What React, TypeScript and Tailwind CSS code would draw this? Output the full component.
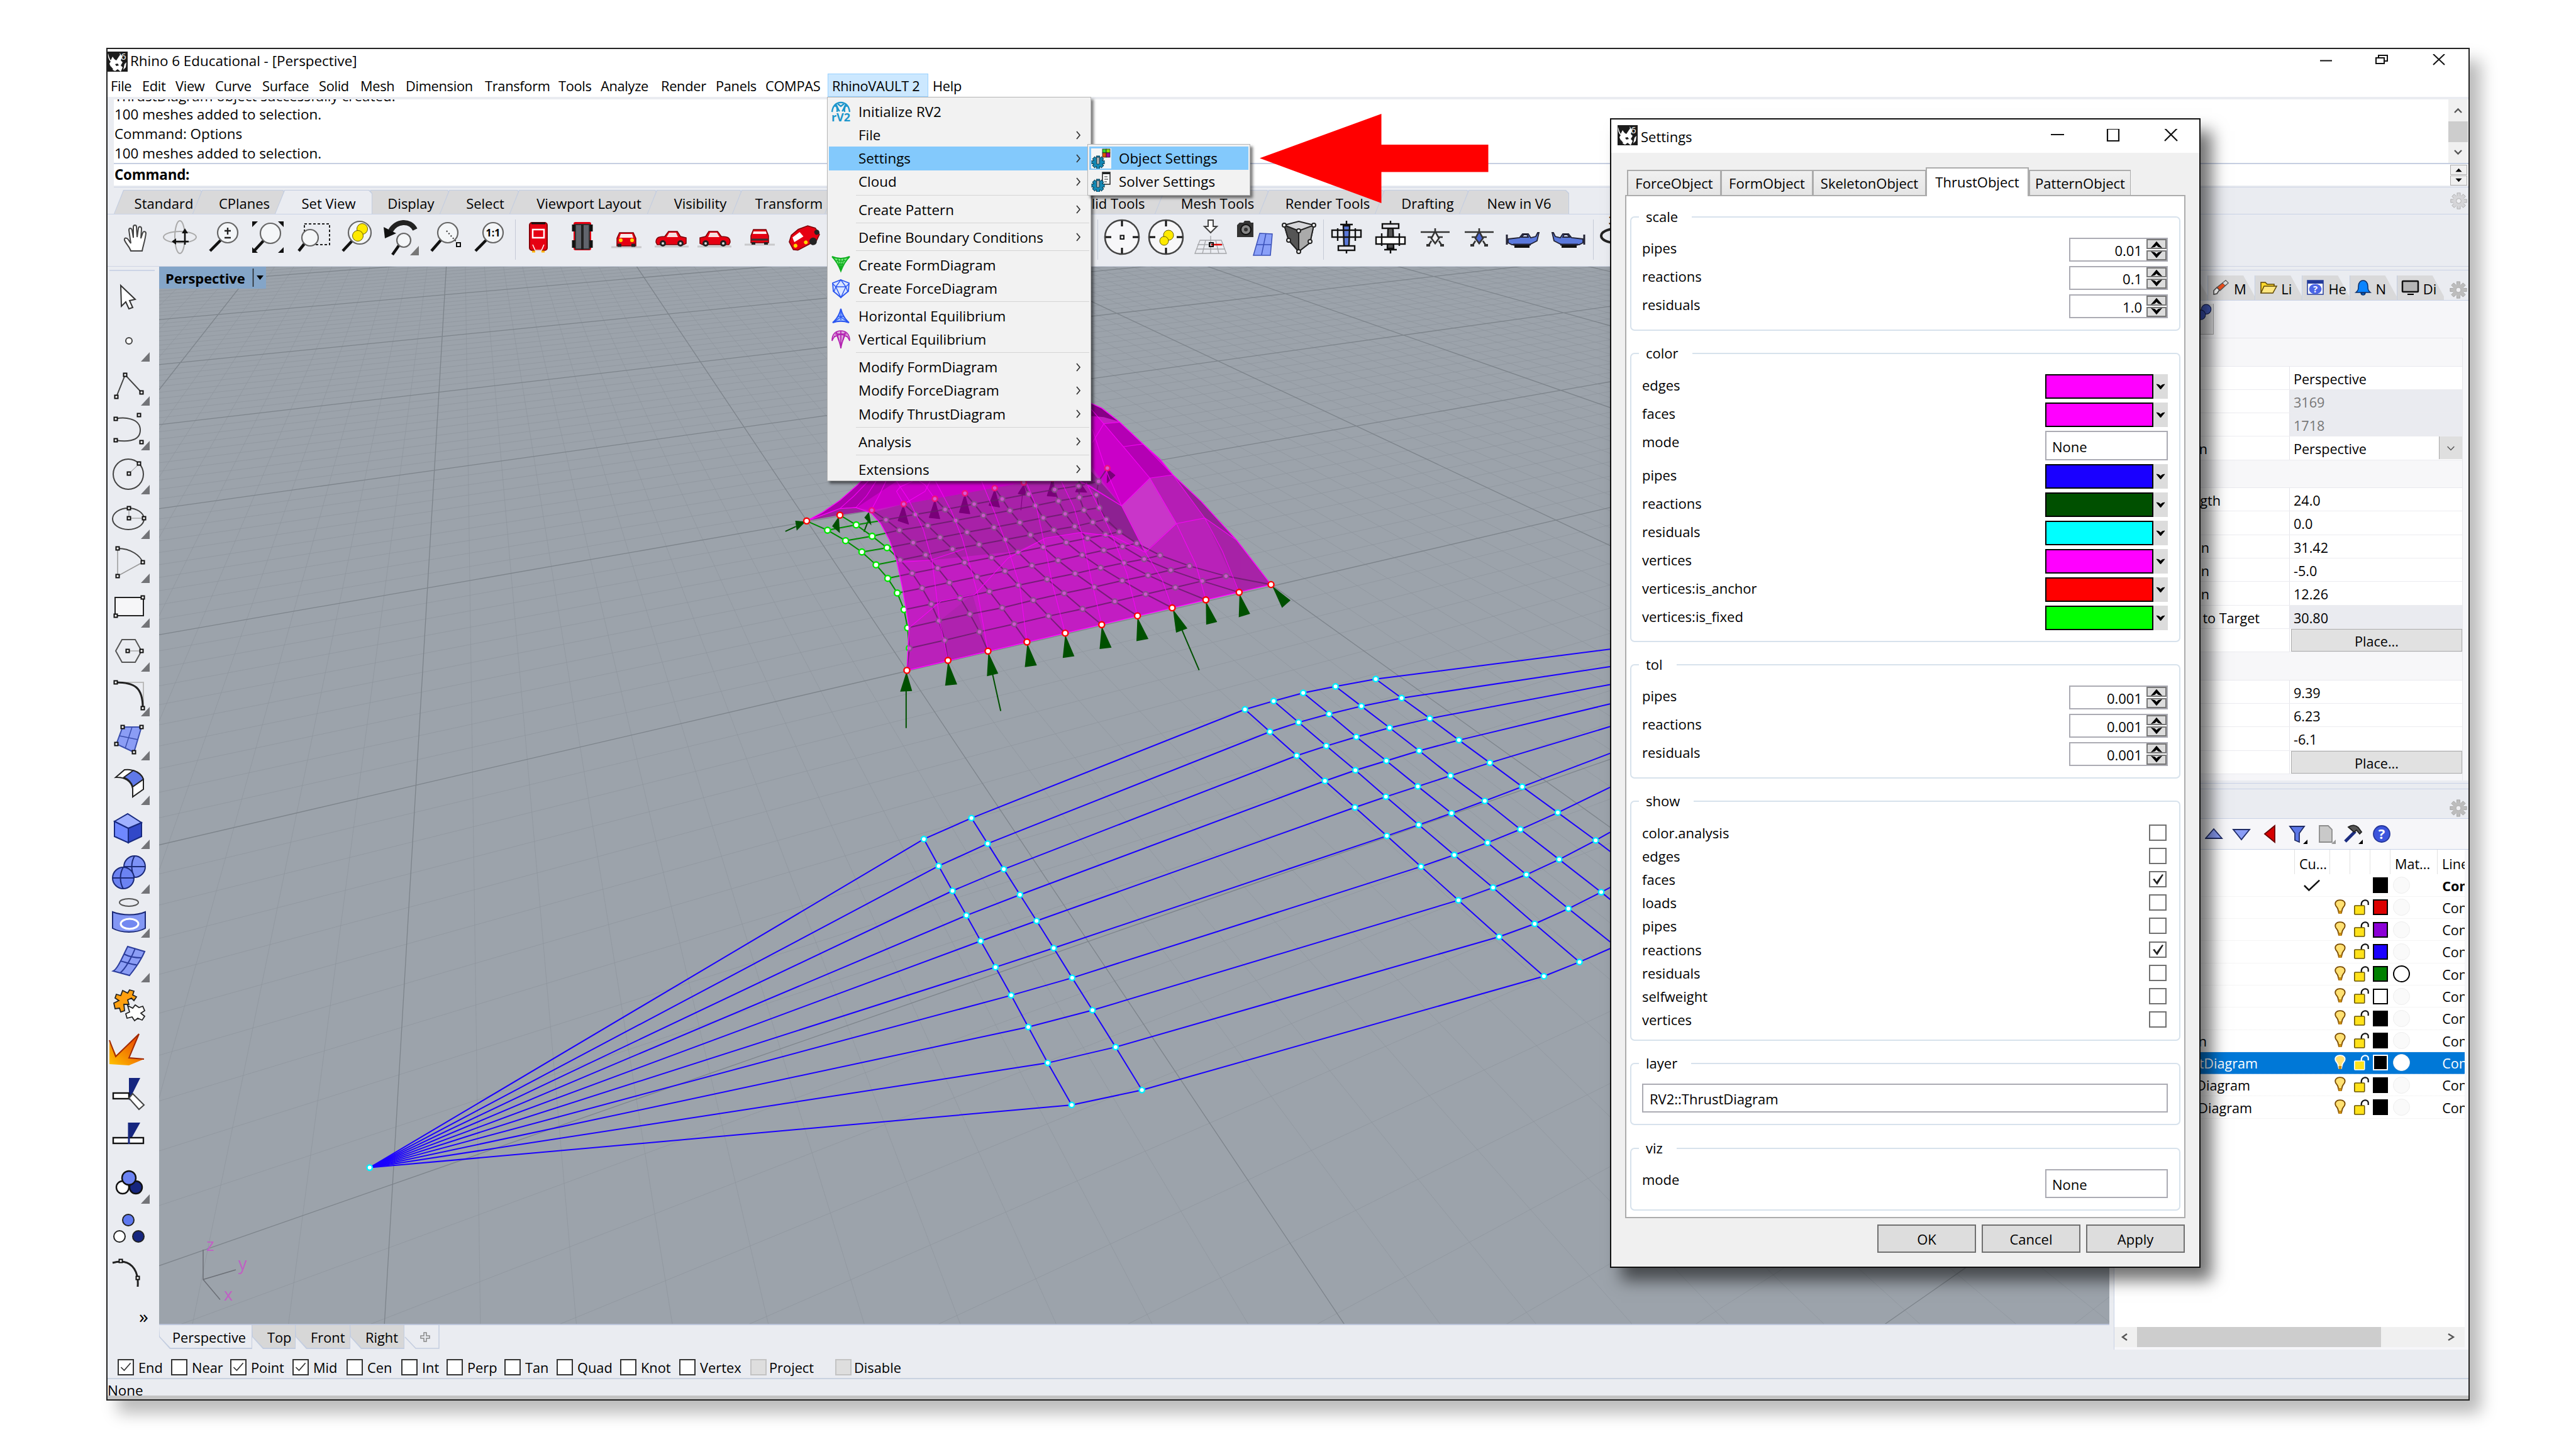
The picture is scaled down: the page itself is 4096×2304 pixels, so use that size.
import React from "react";

type Pt = [number, number];

/* ---------- shared bits ---------- */

function RhinoMark({ className }: { className: string }) {
  return (
    <svg viewBox="0 0 32 32" className={className}>
      <rect width="32" height="32" fill="#1c1c1c" />
      <path d="M1 3c1 4 2 8 4 11l3-6c2 3 3 5 6 6l6-9-1-3c4 4 4 8 2 12l3 3-3 5 3 3-3 7-5-4-4 3-6-3-3-9 2-3C2 13 0 8 1 3z" fill="#fff" />
      <path d="M4 22l5 6-3 2zM12 20l4-1 2 3-4 1z" fill="#1c1c1c" />
      <path d="M27 20l3-3-1 8-4 4z" fill="#fff" />
      <text x="21" y="13" fontSize="15" fill="#fff" fontFamily="Open Sans, sans-serif">6</text>
    </svg>
  );
}

function Gear({ className, color = "#bdbdbd" }: { className: string; color?: string }) {
  return (
    <svg viewBox="-16 -16 32 32" className={className} fill={color} stroke="#9a9a9a" strokeWidth="0.8">
      {[0, 45, 90, 135].map((a) => (
        <rect key={a} x="-3" y="-15" width="6" height="30" transform={`rotate(${a})`} />
      ))}
      <circle r="10.5" stroke="none" />
      <circle r="4.5" fill="#efeff2" />
    </svg>
  );
}

/* ---------- title + menu bar ---------- */

function TitleBar() {
  return (
    <div className="flex h-[39px] shrink-0 items-center bg-white">
      <RhinoMark className="h-[32px] w-[32px]" />
      <span className="ml-[4px]">Rhino 6 Educational - [Perspective]</span>
      <svg viewBox="0 0 200 24" className="mr-[37px] ml-auto h-[24px] w-[200px]" fill="none" stroke="#111" strokeWidth="2">
        <path d="M1 10.500h19" />
        <path d="M90 6h13v9h-13zM94 6V2h14v9h-4" />
        <path d="M181 0l18 17M199 0l-18 17" />
      </svg>
    </div>
  );
}

const MENUS: [string, string][] = [
  ["File", "w-[50px]"], ["Edit", "w-[53px]"], ["View", "w-[63px]"], ["Curve", "w-[75px]"], ["Surface", "w-[90px]"],
  ["Solid", "w-[66px]"], ["Mesh", "w-[72px]"], ["Dimension", "w-[126px]"], ["Transform", "w-[117px]"], ["Tools", "w-[67px]"],
  ["Analyze", "w-[96px]"], ["Render", "w-[87px]"], ["Panels", "w-[79px]"], ["COMPAS", "w-[99px]"],
];

function MenuBar() {
  return (
    <div className="flex h-[37px] shrink-0 items-stretch bg-white pl-[5px] text-[21.800px] leading-[40px] tracking-[-0.300px]">
      {MENUS.map(([m, w]) => (
        <div key={m} className={w}>{m}</div>
      ))}
      <div className="w-[160px] border border-[#99d1ff] bg-[#cce8ff] pl-[6px] leading-[38px]">RhinoVAULT 2</div>
      <div className="pl-[7px]">Help</div>
    </div>
  );
}

/* ---------- command area ---------- */

function CommandArea() {
  return (
    <div className="h-[145px] shrink-0 bg-[#eaecf1] pt-[4px] pl-[10px]">
      <div className="flex h-[103px] border-b-2 border-[#c6cfe2] bg-white">
        <div className="flex h-[101px] flex-1 flex-col justify-end overflow-hidden pl-[1px] leading-[31px]">
          <div className="h-[29px] shrink-0 leading-[31px]">ThrustDiagram object successfully created.</div>
          <div>100 meshes added to selection.</div>
          <div>Command: Options</div>
          <div>100 meshes added to selection.</div>
        </div>
        <div className="mr-[1px] flex w-[31px] flex-col bg-[#f0f0f0]">
          <svg viewBox="0 0 31 35" className="h-[35px]" fill="none" stroke="#555" strokeWidth="2.4"><path d="M10 21l5.500-5.500L21 21" /></svg>
          <div className="h-[33px] bg-[#cdcdcd]" />
          <svg viewBox="0 0 31 33" className="h-[33px]" fill="none" stroke="#555" strokeWidth="2.4"><path d="M10 13l5.500 5.500L21 13" /></svg>
        </div>
      </div>
      <div className="flex h-[34px] items-center bg-white pl-[1px]">
        <b className="tracking-[-0.200px]">Command:</b>
        <div className="mr-[2px] ml-auto flex w-[27px] flex-col gap-[1px]">
          <svg viewBox="0 0 27 15" className="h-[16px] border border-[#adadad] bg-[#f0f0f0]"><path d="M8 11l5.500-6 5.500 6z" /></svg>
          <svg viewBox="0 0 27 15" className="h-[16px] border border-[#adadad] bg-[#f0f0f0]"><path d="M8 4l5.500 6 5.500-6z" /></svg>
        </div>
      </div>
      <div className="mt-[2px] border-t border-[#cdd4e4]" />
    </div>
  );
}

/* ---------- toolbar tabs ---------- */

const TOOL_TABS: [string, string][] = [
  ["Standard", "w-[143px]"], ["CPlanes", "w-[149px]"], ["Set View", "w-[155px]"], ["Display", "w-[143px]"], ["Select", "w-[129px]"],
  ["Viewport Layout", "w-[237px]"], ["Visibility", "w-[153px]"], ["Transform", "w-[165px]"], ["Curve Tools", "w-[184px]"],
  ["Surface Tools", "w-[202px]"], ["Solid Tools", "w-[193px]"], ["Mesh Tools", "w-[184px]"], ["Render Tools", "w-[202px]"],
  ["Drafting", "w-[152px]"], ["New in V6", "w-[175px]"],
];

function ToolTabs() {
  return (
    <div className="flex h-[42px] shrink-0 items-end border-b border-[#c9d2e6] bg-[#eaecf1] pl-[10px]">
      <div className="flex h-[38px]">
        {TOOL_TABS.map(([t, w], i) => (
          <div
            key={t}
            className={`${w} ${i ? "-ml-[18px]" : ""} ${t === "Set View" ? "z-10" : ""} relative h-[38px] bg-[#c3cde0] p-px pb-0 [clip-path:polygon(15px_0,calc(100%_-_5px)_0,100%_5px,100%_100%,0_100%)]`}
          >
            <div
              className={`${t === "Set View" ? "bg-[#eaecf1]" : "bg-[#d9d9da]"} h-full pl-[16px] text-center text-[22px] leading-[41px] [clip-path:polygon(15px_0,calc(100%_-_5px)_0,100%_5px,100%_100%,0_100%)]`}
            >
              {t}
            </div>
          </div>
        ))}
      </div>
      <Gear className="mr-[2px] mb-[7px] ml-auto h-[27px] w-[27px]" color="#d5d5d8" />
    </div>
  );
}

/* ---------- toolbar icons (56 x 56 art board) ---------- */

function Lens({ cx = 34, cy = 21, r = 16, children }: { cx?: number; cy?: number; r?: number; children?: React.ReactNode }) {
  return (
    <g>
      <path d={`M${cx - r * 0.7} ${cy + r * 0.75}L6 50`} stroke="#111" strokeWidth="4.500" />
      <circle cx={cx} cy={cy} r={r} fill="#f4f6f8" stroke="#666" strokeWidth="2.2" />
      {children}
    </g>
  );
}

const Corner = () => <path d="M56 42v15H42z" fill="#777" />;

const CarSide = ({ flip = false }: { flip?: boolean }) => (
  <g transform={flip ? "translate(56 0) scale(-1 1)" : undefined}>
    <path d="M2 43h54" stroke="#c9c9cc" strokeWidth="3" />
    <path d="M4 36c0-8 6-9 14-9l6-8h14l5 8 9 2v9l-4 2H6z" fill="#e60012" stroke="#7d0008" strokeWidth="1.5" />
    <path d="M25 21h11l3 7H21z" fill="#f7dede" />
    <circle cx="15" cy="38" r="5" fill="#222" /><circle cx="15" cy="38" r="2" fill="#ddd" />
    <circle cx="43" cy="38" r="5" fill="#222" /><circle cx="43" cy="38" r="2" fill="#ddd" />
  </g>
);

const PlaneTop = ({ under = false }: { under?: boolean }) => (
  <g stroke="#111" strokeWidth="2.4" transform={under ? "rotate(180 28 28)" : undefined}>
    <path d="M28 2v52M18 8h20" />
    <path d="M23 10h10l-1 30-4 10-4-10z" fill={under ? "#555" : "#5a78d8"} />
    <rect x="5" y="17" width="46" height="11" fill={under ? "#fff" : "none"} />
    <path d="M14 14v20M42 14v20" />
    <rect x="15" y="42" width="26" height="7" fill="#e8e8ee" />
  </g>
);

const PlaneFront = ({ fill }: { fill: string }) => (
  <g stroke="#333" strokeWidth="2.6">
    <path d="M5 20h46M28 14v7M22 34l-5 8M34 34l5 8M16 28h24" />
    <path d="M28 19l6 11-6 8-6-8z" fill={fill} />
    <path d="M14 41h6M36 41h6" strokeWidth="4" />
  </g>
);

const PlaneSide = ({ flip = false }: { flip?: boolean }) => (
  <g transform={flip ? "translate(56 0) scale(-1 1)" : undefined} stroke="#223" strokeWidth="1.8">
    <path d="M4 31l18-2 5-6h9l4 6 8-2 3-6h2l-3 13-12 6H10l-6-3z" fill="#5b79dc" />
    <path d="M25 28l4-4h5l2 4z" fill="#dfe7ff" />
    <path d="M2 24v16" strokeWidth="3" />
    <path d="M12 40h28" strokeWidth="3" />
    <path d="M14 43h24" stroke="#111" strokeWidth="4" />
  </g>
);

const TOP_ICONS: React.ReactNode[] = [
  <g key="hand" stroke="#444" strokeWidth="2" fill="#fff"><path d="M21 50c-2-7-7-10-10-17-1-4 3-5 6-1l4 6-3-21c0-4 4-4 5 0l2 12V12c0-4 5-4 5 0l1 16 2-14c1-4 5-3 5 1l-1 15 3-9c1-3 5-2 5 1-1 10-4 18-6 28z" /></g>,
  <g key="rot" fill="none" strokeWidth="2"><ellipse cx="28" cy="28" rx="26" ry="9" stroke="#aaa" /><ellipse cx="28" cy="28" rx="8" ry="26" stroke="#aaa" /><path d="M17 35h25M36 18v22" stroke="#111" strokeWidth="2.6" /><path d="M15 35l7-5v10zM36 14l-5 8h10z" fill="#111" /></g>,
  <Lens key="pm"><path d="M34 13v11M29 18h10M29 29h10" stroke="#222" strokeWidth="2.400" /></Lens>,
  <g key="ext"><Lens cx={32} cy={22} /><path d="M3 3h9l-9 9zM53 3h-9l9 9zM3 53h9l-9-9zM53 53h-9l9-9z" fill="#111" /></g>,
  <g key="win"><rect x="15" y="7" width="40" height="33" fill="none" stroke="#222" strokeWidth="2" strokeDasharray="4 3" /><Lens cx={24} cy={29} r={13} /></g>,
  <Lens key="sel" cx={33} r={18}><circle cx="37" cy="15" r="8.500" fill="#ffea00" stroke="#665c00" /><circle cx="30" cy="26" r="8.500" fill="#ffea00" stroke="#665c00" /></Lens>,
  <g key="undo"><path d="M50 16C42 0 20 2 11 18" fill="none" stroke="#222" strokeWidth="8" /><path d="M0 12l20 10L2 30z" fill="#111" /><g transform="translate(8 6)"><Lens cx={24} cy={27} r={11} /></g><Corner /></g>,
  <g key="tgt"><Lens cx={32} /><path d="M30 18l16 18" stroke="#333" strokeWidth="2" strokeDasharray="2 3" /><rect x="46" y="37" width="6" height="6" fill="#fff" stroke="#111" strokeWidth="2" /></g>,
  <Lens key="one"><text x="34" y="27" textAnchor="middle" fontSize="16" fontWeight="700" fontFamily="Open Sans, sans-serif">1:1</text></Lens>,
];

const CAR_ICONS: React.ReactNode[] = [
  <g key="c1"><rect x="14" y="5" width="28" height="44" rx="4" fill="#e60012" stroke="#8b0008" strokeWidth="2" /><path d="M17 6h22" stroke="#111" strokeWidth="3" /><path d="M19 16h18v13H19z" fill="none" stroke="#fff" strokeWidth="2.500" /><path d="M19 40l4 9h10l4-9" fill="none" stroke="#fff" strokeWidth="1.500" /><path d="M18 51h5M33 51h5" stroke="#ffb400" strokeWidth="3" /></g>,
  <g key="c2"><rect x="14" y="4" width="28" height="45" rx="3" fill="#e60012" /><rect x="17" y="8" width="22" height="39" fill="#60646c" stroke="#333" strokeWidth="2" /><path d="M28 8v40" stroke="#222" strokeWidth="4" /><path d="M14 8v11M42 8v11M14 33v12M42 33v12" stroke="#111" strokeWidth="5" /></g>,
  <g key="c3"><path d="M4 44h48" stroke="#c9c9cc" strokeWidth="3" /><path d="M13 42V30l4-9h22l4 9v12z" fill="#e60012" stroke="#7d0008" strokeWidth="1.500" /><path d="M19 23h18l2 6H17z" fill="#fbeaea" /><circle cx="19" cy="33" r="3" fill="#ffd900" /><circle cx="37" cy="33" r="3" fill="#ffd900" /><path d="M14 41h6M36 41h6" stroke="#222" strokeWidth="5" /></g>,
  <CarSide key="c4" />,
  <CarSide key="c5" flip />,
  <g key="c6"><path d="M4 40h48" stroke="#c9c9cc" strokeWidth="3" /><path d="M14 37V26l4-10h20l4 10v11z" fill="#e60012" stroke="#7d0008" strokeWidth="1.500" /><path d="M18 19h20l1 4H17z" fill="#fbeaea" /><path d="M15 32h26" stroke="#333" strokeWidth="3" /><path d="M15 38h6M35 38h6" stroke="#222" strokeWidth="4" /></g>,
  <g key="c7" transform="rotate(-28 28 28)"><path d="M4 38V24l8-8 14-3 16 2 9 9 1 12-8 6H10z" fill="#e60012" stroke="#7d0008" strokeWidth="1.500" /><path d="M12 20l14-2 2 9-17 1z" fill="#fff" /><circle cx="10" cy="34" r="3" fill="#ffd900" /><circle cx="27" cy="37" r="3" fill="#ffd900" /><circle cx="38" cy="41" r="6" fill="#222" /><circle cx="50" cy="31" r="4" fill="#222" /></g>,
  <CarSide key="c8" />, <CarSide key="c9" />, <CarSide key="c10" />, <CarSide key="c11" />, <CarSide key="c12" />, <CarSide key="c13" />,
];

const Scope = ({ children }: { children: React.ReactNode }) => (
  <g>
    <circle cx="28" cy="28" r="27" fill="#f7f7f9" stroke="#444" strokeWidth="2.600" />
    <path d="M28 2v9M28 45v9M2 28h9M45 28h9" stroke="#111" strokeWidth="3" />
    {children}
  </g>
);

const VIEW_ICONS: React.ReactNode[] = [
  <Scope key="s1"><rect x="25.500" y="25.500" width="5.500" height="5.500" fill="#fff" stroke="#111" strokeWidth="2" /></Scope>,
  <Scope key="s2"><circle cx="32" cy="25" r="8" fill="#ffea00" stroke="#665c00" /><circle cx="25" cy="34" r="7" fill="#ffea00" stroke="#665c00" /></Scope>,
  <g key="s3" fill="none"><path d="M24 1h8v10h6L28 21 18 11h6z" fill="#fff" stroke="#444" strokeWidth="2" /><path d="M11 33h34l8 21H3zM7 40h42M5 47h46M20 33l-5 21M36 33l5 21M28 26v28" stroke="#a5a6aa" strokeWidth="1.300" /><path d="M29 40h17" stroke="#d00" strokeWidth="2.500" /><rect x="26" y="37" width="6" height="6" stroke="#111" strokeWidth="2" /></g>,
  <g key="s4"><path d="M0 9l4-4h6l2-3h8l2 3h4v23H0z" fill="#333" /><circle cx="14" cy="16" r="8" fill="#888" stroke="#111" strokeWidth="2" /><circle cx="14" cy="16" r="3" fill="#333" /><path d="M36 22l20 1-3 34H26z" fill="#8aa0f8" stroke="#3a50b8" strokeWidth="1.500" /><path d="M46 22l-7 34M31 40h23" stroke="#3a50b8" strokeWidth="1.500" /></g>,
  <g key="s5" stroke="#222" strokeWidth="2"><path d="M28 3l24 6-6 28-18 14-16-18L5 9z" fill="#d7d7da" /><path d="M28 18L5 9l7 24 16 18z" fill="#555" /><path d="M28 18l24-9-6 28-18 14z" fill="#aaa" /><circle cx="28" cy="18" r="3" fill="#fff" /><circle cx="5" cy="9" r="3" fill="#fff" /><circle cx="52" cy="9" r="3" fill="#fff" /><circle cx="28" cy="51" r="3" fill="#fff" /><circle cx="12" cy="33" r="3" fill="#fff" /><circle cx="46" cy="35" r="3" fill="#fff" /></g>,
];

const PLANE_ICONS: React.ReactNode[] = [
  <PlaneTop key="p1" />, <PlaneTop key="p2" under />, <PlaneFront key="p3" fill="#f2f2f4" />, <PlaneFront key="p4" fill="#4a66cf" />,
  <PlaneSide key="p5" />, <PlaneSide key="p6" flip />,
];

function IconGroup({ icons }: { icons: React.ReactNode[] }) {
  return (
    <div className="flex">
      {icons.map((ic, i) => (
        <div key={i} className="flex w-[70.4px] justify-center">
          <svg viewBox="0 0 56 56" className="h-[56px] w-[56px] overflow-visible">{ic}</svg>
        </div>
      ))}
    </div>
  );
}

const Rule = ({ className }: { className: string }) => <div className={`h-[64px] border-l border-[#c5cad6] ${className}`} />;

function ToolRow() {
  return (
    <div className="flex h-[83px] shrink-0 items-start border-b border-[#cfd5e3] bg-[#eaecf1] pt-[8px] pl-[9px]">
      <IconGroup icons={TOP_ICONS} />
      <Rule className="mr-[1px] ml-[5px]" />
      <IconGroup icons={CAR_ICONS} />
      <Rule className="mr-[3px] ml-[9px]" />
      <IconGroup icons={VIEW_ICONS} />
      <Rule className="mr-[1px] ml-[3px]" />
      <IconGroup icons={PLANE_ICONS} />
      <Rule className="mr-[1px] ml-[5px]" />
      <IconGroup
        icons={[
          <g key="d3"><text x="16" y="8" fontSize="17" fontWeight="700" fontFamily="Open Sans, sans-serif">3</text><ellipse cx="26" cy="26" rx="22" ry="11" fill="none" stroke="#222" strokeWidth="4" /></g>,
        ]}
      />
    </div>
  );
}

/* ---------- left tool column ---------- */

const Knot = ({ x, y }: { x: number; y: number }) => (
  <rect x={x - 2.5} y={y - 2.5} width="5" height="5" fill="#fff" stroke="#111" strokeWidth="2" />
);

const SIDE_ICONS: [React.ReactNode, boolean][] = [
  [<path d="M15 11l1 33 7-7 5 11 6-2-5-11 9-2z" fill="#fff" stroke="#333" strokeWidth="2" />, false],
  [<circle cx="28" cy="28" r="5" fill="#fff" stroke="#444" strokeWidth="2" />, true],
  [<g><path d="M8 47L22 12l26 28" fill="none" stroke="#444" strokeWidth="2" /><Knot x={8} y={47} /><Knot x={22} y={12} /><Knot x={48} y={40} /></g>, true],
  [<g><path d="M7 11c12-3 39-2 39 18S19 47 7 45" fill="none" stroke="#444" strokeWidth="2" /><Knot x={7} y={11} /><Knot x={7} y={45} /><Knot x={44} y={5} /><Knot x={48} y={48} /></g>, true],
  [<g><circle cx="27" cy="29" r="24" fill="none" stroke="#444" strokeWidth="2" /><path d="M28 28l16-15" stroke="#888" /><Knot x={28} y={28} /><Knot x={44} y={12} /></g>, true],
  [<g><ellipse cx="27" cy="29" rx="25" ry="17" fill="none" stroke="#444" strokeWidth="2" /><path d="M28 12v16h24" fill="none" stroke="#888" /><Knot x={28} y={28} /><Knot x={28} y={12} /><Knot x={52} y={28} /></g>, true],
  [<g><path d="M10 6c22 0 36 12 40 22" fill="none" stroke="#444" strokeWidth="2" /><path d="M10 6v44l40-22" fill="none" stroke="#999" strokeWidth="1.500" /><Knot x={10} y={6} /><Knot x={10} y={50} /><Knot x={50} y={28} /></g>, true],
  [<g><rect x="6" y="13" width="45" height="29" fill="#f6f6f8" stroke="#222" strokeWidth="2" /><Knot x={7} y={42} /><Knot x={50} y={13} /></g>, true],
  [<g><path d="M7 28l10-18h21l10 18-10 18H17z" fill="none" stroke="#555" strokeWidth="2" /><path d="M26 28h22" stroke="#888" /><Knot x={26} y={28} /><Knot x={48} y={28} /></g>, true],
  [<g><path d="M7 7h44v40" fill="none" stroke="#bbb" strokeWidth="2" /><path d="M7 7c30 0 43 8 43 40" fill="none" stroke="#222" strokeWidth="3" /><Knot x={7} y={7} /><Knot x={50} y={48} /></g>, true],
  [<g><path d="M8 35L18 8h30L36 48z" fill="#8b9df5" stroke="#3b4fae" strokeWidth="2" /><path d="M33 8L22 42M13 22l29 6" stroke="#3b4fae" strokeWidth="1.500" /><Knot x={8} y={35} /><Knot x={18} y={8} /><Knot x={48} y={8} /><Knot x={36} y={48} /></g>, true],
  [<g strokeWidth="2" stroke="#222"><path d="M7 17L21 5c14-2 27 6 30 15v16L34 48V35C32 24 22 16 7 17z" fill="#fff" /><path d="M20 17L35 6c9 3 14 8 16 14L34 32C32 25 27 20 20 17z" fill="#6079e8" /></g>, true],
  [<g strokeWidth="2" stroke="#182a80"><path d="M5 17v24l22 10V28z" fill="#6f88ff" /><path d="M27 28l21-9v22l-21 10z" fill="#3148c8" /><path d="M5 17l21-12 22 14-21 9z" fill="#9fb0ff" /></g>, true],
  [<g strokeWidth="2" stroke="#1b2a78"><circle cx="37" cy="18" r="17" fill="#7d92f6" /><path d="M20 18h34M37 1c-6 10-6 24 0 34" fill="none" /><circle cx="19" cy="36" r="17" fill="#6c83f2" /><path d="M2 36h34M19 19c-6 10-6 24 0 34" fill="none" /></g>, true],
  [<g><ellipse cx="28" cy="5" rx="15" ry="6" fill="none" stroke="#555" strokeWidth="2" /><path d="M2 20c16 6 38 6 52 0v26c-14 8-38 8-52 0z" fill="#8397f4" stroke="#1b2a78" strokeWidth="2" /><ellipse cx="29" cy="39" rx="14" ry="8" fill="#7288f0" stroke="#fff" strokeWidth="3" /></g>, true],
  [<g stroke="#2c3d9c" strokeWidth="2" fill="#8b9df5"><path d="M3 43C10 40 18 20 26 4l27 8c-6 14-16 28-24 38z" /><path d="M14 27c10 2 18 6 26 6M38 7C32 22 22 40 14 46M20 16c8 4 20 6 28 6" fill="none" /></g>, true],
  [<g stroke="#222" strokeWidth="1.800"><path d="M22 24h8l-2-7 6-3 4 4 4-6-6-3 2-6-7-2-3 5-8-4-3 8-7-2-2 6 6 4-8 4 2 9 7-1 2 6 6-2z" fill="#ffa010" transform="translate(-2 2)" /><path d="M26 28l8 4 4-5 6 4 6-2 3 7-6 4 6 5-4 6-7-3-5 4-4-6-8 2-2-7 6-3z" fill="#fff" /></g>, false],
  [<g><defs><linearGradient id="blast" x1="0" y1="1" x2="1" y2="0"><stop offset="0" stopColor="#ffc400" /><stop offset="1" stopColor="#e63200" /></linearGradient></defs><path d="M-3 50V12L8 36 44 2 27 40l25 2-24 10z" fill="url(#blast)" /><path d="M-3 12L7 38 44 2 28 40l24 2" fill="none" stroke="#a02800" strokeWidth="2" /></g>, false],
  [<g><path d="M28 2h18L28 38z" fill="#16267f" /><rect x="3" y="26" width="25" height="9" fill="#fff" stroke="#111" strokeWidth="2.400" /><path d="M28 34l6-7 18 18-8 7z" fill="#fff" stroke="#444" strokeWidth="2" /></g>, false],
  [<g><path d="M28 2h18L28 34z" fill="#16267f" /><rect x="3" y="26" width="48" height="9" fill="#fff" stroke="#111" strokeWidth="2.400" /><path d="M28 2v34" stroke="#16267f" strokeWidth="3" /></g>, false],
  [<g stroke="#111" strokeWidth="2.400"><circle cx="18" cy="35" r="10" fill="#fff" /><circle cx="39" cy="35" r="10" fill="#16267f" /><circle cx="28" cy="20" r="11" fill="#6c83f2" /></g>, true],
  [<g stroke="#222" strokeWidth="2"><circle cx="27" cy="16" r="9" fill="#5f79f0" /><circle cx="13" cy="42" r="9" fill="#fff" /><circle cx="43" cy="42" r="9" fill="#16267f" /></g>, false],
  [<g><path d="M2 14C30 6 44 24 42 52" fill="none" stroke="#222" strokeWidth="3" /><Knot x={15} y={11} /><Knot x={42} y={38} /></g>, false],
];

function SideTools() {
  return (
    <div className="w-[82px] shrink-0 bg-[#eaecf1] pt-[5px]">
      <div className="ml-[3px] w-[72px] border-t-2 border-[#ccd4e6]" />
      <div className="mt-[4px]">
        {SIDE_ICONS.map(([ic, more], i) => (
          <div key={i} className="flex h-[70.500px] items-center pl-[6px]">
            <svg viewBox="0 0 64 64" className="h-[64px] w-[64px] overflow-visible">
              <g transform="translate(0 5)">{ic}</g>
              {more && <path d="M61 51v15H47z" fill="#737478" />}
            </svg>
          </div>
        ))}
      </div>
      <div className="mt-[22px] pl-[50px] text-[30px] leading-[28px]">»</div>
    </div>
  );
}

/* ---------- viewport ---------- */

const SCALE = 0.768;
const HORIZON = 10;

function gridLines() {
  const minor: string[] = [];
  const major: string[] = [];
  for (let i = -26; i <= 80; i++) {
    const m = 0.669 + 0.07275 * i;
    const seg = `M${(957 + m * 540) * SCALE} ${550 * SCALE}L${(957 + m * 2740) * SCALE} ${2750 * SCALE}`;
    (i % 10 === 0 ? major : minor).push(seg);
  }
  for (let j = -21; j <= 68; j++) {
    const w = 4.3 + 0.1435 * j;
    const y = (x: number) => (HORIZON + (7810 - x) / w) * SCALE;
    const seg = `M${320 * SCALE} ${y(320)}L${4380 * SCALE} ${y(4380)}`;
    (j % 10 === 0 ? major : minor).push(seg);
  }
  return { minor: minor.join(""), major: major.join("") };
}

const force = ([x, y]: Pt): Pt => [1421.5 + 0.73469 * x, 998.4 + 0.51428 * y];
const shell = ([x, y]: Pt): Pt => [1229.5 + 0.56325 * x, 629.76 + 0.35265 * y];
const poly = (pts: Pt[], map: (p: Pt) => Pt) => pts.map((p) => map(p).map((n) => n.toFixed(1)).join(",")).join(" ");

const FORCE_COLS: Pt[][] = [
  [[66, 653], [98, 736], [128, 813], [158, 889], [189, 968], [221, 1049], [255, 1136], [292, 1234], [334, 1345], [386, 1475]],
  [[169, 588], [204, 667], [239, 746], [274, 825], [310, 906], [347, 990], [387, 1082], [431, 1182], [481, 1296], [538, 1429]],
  [[761, 252], [815, 321], [873, 395], [934, 473], [999, 555], [1068, 643], [1142, 738], [1223, 842], [1311, 955], [1408, 1077]],
  [[823, 226], [877, 292], [937, 365], [1000, 440], [1066, 522], [1137, 609], [1214, 702], [1298, 803], [1388, 915], [1485, 1033]],
  [[887, 201], [943, 266], [1002, 337], [1067, 411], [1135, 490], [1208, 573], [1286, 664], [1370, 763], [1461, 868], [1563, 984]],
  [[957, 181], [1013, 242], [1074, 309], [1138, 380], [1206, 457], [1280, 535], [1357, 623], [1441, 716], [1532, 817], [1630, 930]],
  [[1044, 158], [1100, 217], [1161, 280], [1224, 347], [1291, 417], [1361, 491], [1438, 571], [1520, 657], [1612, 757], [1715, 868]],
];
const FORCE_ENDS = [66, 120, 175, 235, 305, 388, 493, 632, 757, 868];
const FORCE_ROOT: Pt = [-1133.5, 1668.7];

const FORM: Pt[][] = [
  [[379, 1237], [495, 1192], [608, 1150], [718, 1109], [826, 1069], [929, 1031], [1030, 991], [1128, 955], [1223, 919], [1317, 885], [1407, 850]],
  [[386, 1137], [486, 1101], [584, 1063], [682, 1028], [779, 992], [875, 960], [966, 926], [1053, 893], [1137, 863], [1213, 834], [1280, 812]],
  [[381, 1045], [469, 1013], [557, 983], [648, 955], [736, 920], [823, 889], [908, 861], [987, 832], [1060, 808], [1124, 785], [1177, 766]],
  [[371, 963], [448, 938], [529, 911], [612, 881], [694, 853], [775, 826], [854, 800], [926, 774], [992, 752], [1049, 735], [1094, 718]],
  [[352, 888], [422, 866], [499, 841], [577, 815], [656, 789], [732, 764], [806, 741], [874, 717], [935, 695], [988, 678], [1028, 664]],
  [[325, 822], [394, 799], [466, 776], [542, 751], [618, 728], [693, 704], [764, 681], [829, 660], [889, 641], [940, 625], [979, 612]],
  [[292, 761], [360, 739], [432, 716], [508, 690], [583, 669], [657, 647], [728, 626], [794, 604], [853, 588], [904, 569], [942, 556]],
  [[252, 703], [323, 684], [397, 661], [473, 637], [549, 614], [625, 592], [698, 570], [764, 549], [826, 531], [879, 514], [922, 504]],
  [[206, 652], [281, 632], [358, 605], [438, 584], [517, 561], [595, 538], [670, 516], [742, 494], [807, 473], [866, 457], [914, 445]],
  [[155, 605], [236, 581], [320, 558], [403, 534], [487, 511], [569, 487], [648, 464], [723, 442], [796, 422], [864, 405], [920, 385]],
  [[96, 563], [190, 537], [280, 515], [370, 487], [458, 463], [543, 438], [627, 415], [709, 390], [790, 372], [868, 350], [945, 325]],
];

const OUTLINE: Pt[] = [
  [379, 1237], [385, 1045], [378, 970], [366, 860], [350, 740], [330, 650], [305, 575], [278, 527], [235, 503], [190, 507], [96, 563],
  [140, 525], [190, 470], [240, 400], [300, 300], [500, 60], [800, 10], [900, 33], [930, 55], [978, 115], [1045, 215], [1095, 287],
  [1130, 355], [1210, 475], [1310, 650], [1407, 850],
];

const FACETS: [string, Pt[]][] = [
  ["#a821a9", [[278, 527], [370, 487], [543, 438], [709, 390], [868, 390], [915, 440], [990, 620], [960, 632], [870, 615], [770, 640], [690, 700], [445, 740], [345, 740], [318, 620]]],
  ["#8f2192", [[900, 340], [985, 495], [1048, 700], [1020, 655], [940, 570], [915, 440], [870, 385]]],
  ["#cb00c8", [[255, 384], [240, 400], [235, 503], [278, 515], [370, 487], [543, 438], [709, 390], [790, 380], [900, 330], [900, 200], [300, 200]]],
  ["#ab00ab", [[96, 563], [140, 525], [190, 470], [240, 400], [300, 300], [350, 384], [240, 500], [190, 507]]],
  ["#cb00c8", [[900, 60], [935, 125], [990, 228], [1065, 370], [985, 495], [915, 350], [895, 300]]],
  ["#860086", [[900, 33], [930, 55], [978, 115], [935, 95], [900, 90]]],
  ["#b400b4", [[935, 125], [980, 118], [1050, 215], [1130, 355], [1065, 370], [990, 228]]],
  ["#c935c9", [[1065, 370], [1140, 575], [1053, 705], [985, 495]]],
  ["#b71fb7", [[1065, 370], [1130, 355], [1220, 550], [1140, 575]]],
  ["#922592", [[1130, 355], [1210, 475], [1310, 650], [1280, 620], [1220, 550]]],
  ["#b923b9", [[1140, 575], [1220, 550], [1317, 885], [1225, 915], [1128, 955], [1050, 705]]],
  ["#a724a7", [[1220, 550], [1310, 650], [1407, 850], [1317, 885]]],
  ["#ba22ba", [[385, 1045], [475, 925], [560, 890], [608, 1150], [379, 1237]]],
  ["#b024b0", [[495, 1192], [470, 1015], [565, 895], [608, 1150]]],
];

const RIBS: Pt[][] = [
  [[495, 1192], [472, 1020], [450, 740], [425, 600], [385, 470], [350, 384]],
  [[608, 1150], [580, 900], [560, 780], [535, 640], [505, 520], [460, 384]],
  [[718, 1109], [697, 850], [665, 690], [628, 530], [590, 384]],
  [[826, 1069], [790, 850], [765, 650], [745, 500], [715, 384]],
  [[929, 1031], [900, 830], [872, 615], [850, 500], [815, 384]],
  [[1030, 991], [1000, 800], [960, 632], [930, 530], [885, 390]],
  [[1128, 955], [1100, 830], [1053, 705], [985, 495], [940, 330], [903, 150]],
  [[1223, 919], [1195, 760], [1140, 575], [1065, 370], [990, 228], [935, 125], [900, 60]],
  [[1317, 885], [1270, 700], [1220, 550], [1130, 355], [1045, 215], [978, 115], [930, 55]],
  [[385, 1045], [475, 925], [570, 895], [665, 730], [770, 640], [870, 615], [960, 632], [1053, 705], [1140, 575], [1220, 550], [1310, 650]],
  [[350, 750], [445, 740], [540, 690]],
  [[890, 400], [985, 495], [1065, 370], [1130, 355]],
  [[870, 385], [985, 495]],
  [[903, 210], [935, 125], [978, 118]],
  [[990, 228], [1050, 215]],
  [[190, 507], [230, 450], [270, 384]],
  [[235, 503], [265, 450], [292, 384]],
  [[278, 515], [300, 450], [320, 384]],
  [[370, 487], [350, 430], [360, 410], [395, 384]],
  [[458, 463], [430, 400], [415, 384]],
  [[370, 487], [430, 430], [445, 384]],
];

const FRONT_CONES: Pt[][] = [
  [[378, 1243], [360, 1333], [394, 1330]], [[495, 1198], [487, 1306], [521, 1300]], [[609, 1156], [605, 1263], [637, 1251]],
  [[719, 1115], [712, 1222], [746, 1214]], [[826, 1075], [819, 1181], [852, 1173]], [[929, 1037], [923, 1141], [957, 1134]],
  [[1030, 997], [1027, 1105], [1061, 1095]], [[1130, 961], [1139, 1067], [1171, 1048]], [[1223, 925], [1224, 1031], [1255, 1019]],
  [[1318, 891], [1316, 997], [1348, 982]], [[1410, 856], [1438, 955], [1462, 921]], [[93, 566], [64, 562], [68, 607]],
  [[187, 543], [168, 587], [190, 618]], [[272, 522], [259, 548], [279, 583]],
];
const BACK_CONES: Pt[][] = [
  [[369, 493], [354, 562], [384, 578]], [[458, 469], [442, 548], [472, 553]], [[543, 444], [527, 525], [557, 531]],
  [[627, 421], [611, 493], [641, 501]], [[709, 400], [693, 440], [716, 447]], [[788, 384], [775, 450], [803, 453]],
  [[868, 390], [855, 432], [887, 434]], [[946, 330], [967, 357], [944, 392]],
];
const SHAFTS: Pt[][] = [
  [[377, 1330], [377, 1497]], [[621, 1255], [644, 1420]], [[1156, 1056], [1204, 1236]], [[66, 588], [36, 610]], [[269, 566], [258, 612]],
];

function FormNet({ edge, width }: { edge: string; width: number }) {
  return (
    <g fill="none" stroke={edge} strokeWidth={width}>
      {FORM.slice(1, 10).map((row, i) => <polyline key={`r${i}`} points={poly(row, shell)} />)}
      {FORM[0].map((_, c) => <polyline key={`c${c}`} points={poly(FORM.map((r) => r[c]), shell)} />)}
    </g>
  );
}

function Dots({ pts, map, fill, ring, r = 4.6 }: { pts: Pt[]; map: (p: Pt) => Pt; fill: string; ring: string; r?: number }) {
  return (
    <g fill={fill} stroke={ring} strokeWidth="2.4">
      {pts.map((p, i) => {
        const [cx, cy] = map(p);
        return <circle key={i} cx={cx} cy={cy} r={r} />;
      })}
    </g>
  );
}

function Scene() {
  const { minor, major } = gridLines();
  const inner = FORM.slice(1, 10).flat();
  return (
    <svg viewBox="254 424 3101 1681" className="block h-[1681px] w-[3101px] bg-[#9ca3ab]">
      <defs>
        <clipPath id="shell"><polygon points={poly(OUTLINE, shell)} /></clipPath>
      </defs>
      <path d={minor} stroke="#8f969e" strokeWidth="1" strokeOpacity="0.75" />
      <path d={major} stroke="#7d848b" strokeWidth="1.3" />

      <g fill="none" stroke="#1a00ff" strokeWidth="2">
        {FORCE_COLS.map((c, i) => <polyline key={i} points={poly(c, force)} />)}
        {FORCE_ENDS.map((y, r) => (
          <polyline
            key={r}
            points={poly([FORCE_ROOT, ...FORCE_COLS.map((c) => c[r]), ...(r < 8 ? [[1551, y] as Pt] : [])], force)}
          />
        ))}
      </g>
      <Dots pts={[FORCE_ROOT, ...FORCE_COLS.flat()]} map={force} fill="#fff" ring="#00f0ff" r={4.2} />

      <g fill="#005000" stroke="#005000" strokeWidth="2">
        {SHAFTS.map((s, i) => <polyline key={i} points={poly(s, shell)} />)}
      </g>
      <FormNet edge="#008a00" width={2} />
      <Dots pts={inner} map={shell} fill="#fff" ring="#00e800" />
      <g fill="#005000">{FRONT_CONES.slice(11).map((c, i) => <polygon key={i} points={poly(c, shell)} />)}</g>
      <polygon points={poly([[96, 563], [190, 537], [280, 515], [240, 500], [190, 507]], shell)} fill="#9b239b" />

      <g clipPath="url(#shell)">
        <polygon points={poly(OUTLINE, shell)} fill="#c21fc2" />
        {FACETS.map(([c, p], i) => <polygon key={i} points={poly(p, shell)} fill={c} />)}
        <g fill="#7a007a" stroke="#7a007a">
          {BACK_CONES.map((c, i) => <polygon key={i} points={poly(c, shell)} />)}
          <polyline points={poly([[705, 445], [701, 515]], shell)} />
        </g>
        <g opacity="0.85">
          <FormNet edge="#6a1f6c" width={2} />
          <Dots pts={inner} map={shell} fill="#d858d6" ring="#86528a" r={4} />
        </g>
        <g fill="none" stroke="#ff00ff" strokeWidth="1.1" opacity="0.85">
          {RIBS.map((r, i) => <polyline key={i} points={poly(r, shell)} />)}
        </g>
      </g>
      <polygon points={poly(OUTLINE, shell)} fill="none" stroke="#ff00ff" strokeWidth="1.4" />
      <g fill="#005000">{FRONT_CONES.slice(0, 11).map((c, i) => <polygon key={i} points={poly(c, shell)} />)}</g>
      <Dots pts={[...FORM[0], ...FORM[10].slice(0, 2)]} map={shell} fill="#fff" ring="#ff0000" />
      <Dots pts={FORM[10].slice(2)} map={shell} fill="#d858d6" ring="#f0107a" r={4} />

      <path d="M324 1987v47.500l52-15.500M324 2034.500l27 32" fill="none" stroke="#6b6f76" strokeWidth="1.5" />
      <g fill="#c060c4" fontSize="27" fontFamily="Open Sans, sans-serif">
        <text x="329" y="1989">z</text>
        <text x="380" y="2019">y</text>
        <text x="357" y="2068">x</text>
      </g>
    </svg>
  );
}

const VIEW_TABS: [string, string][] = [
  ["Perspective", "w-[148px]"], ["Top", "w-[69px]"], ["Front", "w-[87px]"], ["Right", "w-[86px]"],
];

function Viewport() {
  return (
    <div className="relative w-[3101px] shrink-0 bg-[#eaecf1]">
      <Scene />
      <div className="absolute top-0 left-0 flex h-[35px] w-[170px] items-center bg-[#84a5c8] pl-[10px]">
        <b className="text-[22px] tracking-[-0.100px]">Perspective</b>
        <svg viewBox="0 0 24 35" className="absolute right-0 h-[35px] w-[24px]"><path d="M3.500 3v29" stroke="#222" strokeWidth="1.500" /><path d="M9 14h11l-5.500 7z" /></svg>
      </div>
      <div className="flex h-[41px] border-t-2 border-[#bcc5da]">
        {VIEW_TABS.map(([t, w], i) => (
          <div key={t} className={`${w} h-[38px] bg-[#c3cde0] pr-px pb-[2px] [clip-path:polygon(0_0,100%_0,100%_100%,17px_100%,0_50%)]`}>
            <div className={`${i ? "bg-[#d7d7d7] pl-[24px]" : "bg-[#eaecf1] pl-[21px]"} h-full text-[21.800px] leading-[39px] [clip-path:polygon(0_0,100%_0,100%_100%,18px_100%,1px_50%)]`}>{t}</div>
          </div>
        ))}
        <svg viewBox="0 0 56 38" className="h-[38px] w-[56px]" fill="none" stroke="#c3cde0" strokeWidth="1.500">
          <path d="M1 19l17 18h37V0" />
          <path d="M31 12h4v5h5v4h-5v5h-4v-5h-5v-4h5z" stroke="#888" />
        </svg>
      </div>
    </div>
  );
}

/* ---------- right panels ---------- */

const PANEL_TABS: [string, React.ReactNode][] = [
  ["M", <g><path d="M1 17l5-5 4 4-4 6-5 1z" fill="#fff" stroke="#444" strokeWidth="1.500" /><path d="M6 12L20 1l4 4L11 17z" fill="#f4511e" stroke="#555" strokeWidth="1.500" /><path d="M15 5l5-4 4 4-5 4z" fill="#ddd" stroke="#555" /></g>],
  ["Li", <g stroke="#5d4600" strokeWidth="1.500"><path d="M1 21V4h7l3 3h11v4" fill="#ffd92e" /><path d="M1 21l5-11h20l-6 11z" fill="#ffe680" /></g>],
  ["He", <g><rect x="0" y="1" width="25" height="22" fill="#fff" stroke="#223a9a" strokeWidth="1.500" /><path d="M0 1h25v5H0z" fill="#223a9a" /><ellipse cx="12.500" cy="14.500" rx="10" ry="8" fill="#4c66e6" /><text x="12.500" y="20" fontSize="15" fontWeight="700" textAnchor="middle" fill="#fff" fontFamily="Open Sans, sans-serif">?</text></g>],
  ["N", <g stroke="#0b2d66" strokeWidth="1.500"><path d="M1 20c4-3 4-6 4-10 0-12 15-12 15 0 0 4 0 7 4 10z" fill="#0a84ff" /><path d="M9 21c1 4 6 4 7 0z" fill="#0a84ff" /></g>],
  ["Di", <g><rect x="0" y="2" width="25" height="17" rx="1" fill="#b5b5b5" stroke="#111" strokeWidth="2.500" /><path d="M8 22h10v2H8z" /></g>],
];

type Prop = { label?: string; value: string; kind?: "ro" | "calc" | "combo" | "button" };
const PROPS: (Prop | null)[] = [
  null,
  { value: "Perspective" }, { value: "3169", kind: "ro" }, { value: "1718", kind: "ro" }, { label: "Projection", value: "Perspective", kind: "combo" },
  null,
  { label: "Lens Length", value: "24.0" }, { value: "0.0" }, { label: "X Location", value: "31.42" }, { label: "Y Location", value: "-5.0" },
  { label: "Z Location", value: "12.26" }, { label: "Distance to Target", value: "30.80", kind: "calc" }, { value: "Place...", kind: "button" },
  null,
  { value: "9.39" }, { value: "6.23" }, { value: "-6.1" }, { value: "Place...", kind: "button" },
];
const LABEL_W: Record<string, string> = {
  Projection: "w-[148px]", "Lens Length": "w-[169px]", "X Location": "w-[151px]", "Y Location": "w-[151px]", "Z Location": "w-[151px]", "Distance to Target": "w-[231px]",
};

function PropertyGrid() {
  return (
    <div className="mr-[9px] border-t border-r border-[#e6e6ea] pb-[10px] text-[21.600px]">
      {PROPS.map((p, i) =>
        p === null ? (
          <div key={i} className="h-[44.500px] border-b border-[#e9e9ee] bg-[#f7f7f9]" />
        ) : (
          <div key={i} className="flex h-[37.300px] border-b border-[#ececf0] bg-white leading-[40px]">
            <div className="w-[279px] shrink-0 border-r border-[#e4e4ea]">
              {p.label && <div className={`${LABEL_W[p.label]} text-right whitespace-nowrap`}>{p.label}</div>}
            </div>
            {p.kind === "button" ? (
              <div className="ml-[2px] flex-1 border border-[#adadad] bg-[#e1e1e1] text-center leading-[37px]">{p.value}</div>
            ) : (
              <div className={`flex flex-1 justify-between pl-[6px] ${p.kind === "ro" ? "bg-[#eaebf0] text-[#777]" : p.kind === "calc" ? "bg-[#eaebf0]" : ""}`}>
                {p.value}
                {p.kind === "combo" && (
                  <svg viewBox="0 0 37 36" className="h-[36px] w-[37px] border-l border-[#aaa] bg-[#dfdfdf]" fill="none" stroke="#555" strokeWidth="1.500"><path d="M13 16l5.500 5.500L24 16" /></svg>
                )}
              </div>
            )}
          </div>
        ),
      )}
    </div>
  );
}

const LAYERS: { name?: string; color: string; mat?: string; current?: boolean; sel?: boolean; w?: string }[] = [
  { color: "#000", current: true },
  { color: "#dc0000" }, { color: "#8b00d6" }, { color: "#1a00ff" }, { color: "#008000", mat: "#000" }, { color: "#fff" }, { color: "#000" },
  { name: "Skeleton", color: "#000", w: "w-[147px]" }, { name: "ThrustDiagram", color: "#000", sel: true, w: "w-[228px]" },
  { name: "FormDiagram", color: "#000", w: "w-[216px]" }, { name: "ForceDiagram", color: "#000", w: "w-[219px]" },
];

function LayerRow({ l }: { l: (typeof LAYERS)[number] }) {
  return (
    <div className={`flex h-[35.300px] items-center border-b border-dotted ${l.sel ? "border-[#9fc4e8] bg-[#0078d7] text-white" : "border-[#ececec]"}`}>
      <div className="w-[287px] shrink-0 pt-[2px]">
        {l.name && <div className={`${l.w} text-right whitespace-nowrap`}>{l.name}</div>}
      </div>
      <div className="flex w-[54px] justify-center">
        {l.current && <svg viewBox="0 0 28 20" className="h-[20px] w-[26px]" fill="none" stroke="#111" strokeWidth="2.800"><path d="M1 10l8 8L27 1" /></svg>}
      </div>
      <svg viewBox="0 0 64 30" className={`ml-[2px] h-[30px] w-[64px] ${l.current ? "invisible" : ""}`}>
        <path d="M16 3c7 0 9 5 7 9-2 3-4 4-4 8l-1 4h-4l-1-4c0-4-2-5-4-8-2-4 0-9 7-9z" fill="#ffe173" stroke={l.sel ? "#fff" : "#7a4b00"} strokeWidth="1.800" />
        <path d="M13.500 20h5l-.5 5h-4z" fill="#c98a10" />
        <path d="M50 12c-1-10 10-11 11-5v4" fill="none" stroke={l.sel ? "#fff" : "#111"} strokeWidth="2.200" />
        <rect x="39" y="12" width="16" height="14" rx="1" fill="#ffe21a" stroke={l.sel ? "#fff" : "#6a5600"} strokeWidth="1.600" />
      </svg>
      <div className="ml-[5px] h-[25px] w-[24px] border-2" style={{ backgroundColor: l.color, borderColor: l.sel ? "#fff" : "#000" }} />
      <div className="ml-[8px] h-[27px] w-[27px] rounded-full border" style={{ borderColor: l.mat ?? "#ededed", backgroundColor: l.mat || l.sel ? "#fff" : "#fafafa", borderWidth: l.mat ? 2 : 1 }} />
      <div className={`ml-[51px] w-[36px] overflow-hidden pt-[2px] leading-[28px] whitespace-nowrap ${l.current ? "font-bold" : ""}`}>Continuous</div>
    </div>
  );
}

function LayerTools() {
  return (
    <div className="flex h-[49px] items-center border-b border-[#c9d2e6] bg-[#f6f6f9] pl-[144px]">
      <svg viewBox="0 0 310 36" className="h-[36px] w-[310px]" strokeWidth="1.800">
        <path d="M1 25L14 10l13 15z" fill="#8a9df5" stroke="#1f2b66" />
        <path d="M45 11h26L58 27z" fill="#8a9df5" stroke="#1f2b66" />
        <path d="M95 18l16-13v26z" fill="#d60000" stroke="#6b0000" />
        <path d="M135 6h23l-8 11v14l-7-3V17z" fill="#5c78e8" stroke="#1f2b66" />
        <path d="M163 34v-7l-7 7zM251 34v-7l-7 7z" />
        <path d="M182 5h14l6 6v20h-20z" fill="#c9c9c9" stroke="#8d8d8d" />
        <path d="M208 34v-7l-7 7z" fill="#999" />
        <path d="M223 30l16-16" stroke="#1b2c80" strokeWidth="5" />
        <path d="M228 7c6-4 12-3 16 1l5 7-3 3-5-6-4 3z" fill="#555" stroke="#222" />
        <circle cx="281" cy="18" r="13" fill="#3c55dd" stroke="#26379a" />
        <text x="281" y="26" textAnchor="middle" fontSize="22" fontWeight="700" fill="#fff" fontFamily="Open Sans, sans-serif">?</text>
      </svg>
    </div>
  );
}

function RightPanels() {
  return (
    <div className="ml-[7px] flex min-w-0 flex-1 flex-col border-l border-[#c9d2e6] bg-[#f6f6f9]">
      <div className="h-[14px] bg-[#eaecf1] pt-[5px]"><div className="border-t border-[#c9d2e6]" /></div>
      <div className="flex h-[40px] items-end border-b border-[#c9d2e6] bg-[#eaecf1] pl-[74px]">
        <div className="-mr-[1px] h-[39px] w-[75px] bg-[#d9d9da] pl-[40px] leading-[43px] [clip-path:polygon(0_0,55px_0,100%_85%,100%_100%,0_100%)]">e</div>
        {PANEL_TABS.map(([t, ic]) => (
          <div key={t} className="relative flex h-[39px] w-[75.200px] shrink-0 items-center border-l border-[#c3cde0] pl-[7px] text-[22px]">
            <div className="absolute inset-0 bg-[#d9d9da] [clip-path:polygon(0_0,56px_0,100%_85%,100%_100%,0_100%)]" />
            <svg viewBox="-1 0 28 25" className="relative h-[27px] w-[28px] shrink-0 overflow-visible">{ic}</svg>
            <span className="relative ml-[6px] pt-[2px]">{t}</span>
          </div>
        ))}
        <Gear className="mr-[2px] mb-[2px] ml-auto h-[28px] w-[28px]" />
      </div>
      <div className="flex h-[59px] pt-[5px]">
        <div className="h-[49px] w-[158px] border-r border-b border-[#aaa] bg-[#e4e4e6]">
          <svg viewBox="0 0 40 40" className="ml-auto h-[44px] w-[44px]" stroke="#142058">
            <circle cx="30" cy="8" r="7" fill="#4a62c8" /><circle cx="22" cy="16" r="7" fill="#3f57c0" /><circle cx="13" cy="26" r="7" fill="#3f57c0" />
          </svg>
        </div>
      </div>
      <PropertyGrid />
      <div className="h-[14px] border-b border-[#c9d2e6] bg-[#eaecf1] pt-[4px]"><div className="border-t border-[#c9d2e6]" /></div>
      <div className="flex h-[47px] items-center border-b border-[#c9d2e6] bg-[#eaecf1]"><Gear className="mt-[14px] mr-[2px] ml-auto h-[28px] w-[28px]" /></div>
      <LayerTools />
      <div className="mr-[6px] flex-1 bg-white text-[21.600px]">
        <div className="flex h-[39.500px] leading-[45px]">
          <div className="w-[287px] border-r border-[#e2e2e2]" />
          <div className="w-[56px] border-r border-[#e2e2e2] pl-[7px]">Cu...</div>
          <div className="w-[32px] border-r border-[#e2e2e2]" />
          <div className="w-[32px] border-r border-[#e2e2e2]" />
          <div className="w-[32px] border-r border-[#e2e2e2]" />
          <div className="w-[75px] border-r border-[#e2e2e2] pl-[7px]">Mat...</div>
          <div className="w-[43px] overflow-hidden pl-[7px] whitespace-nowrap">Linetype</div>
        </div>
        {LAYERS.map((l, i) => <LayerRow key={i} l={l} />)}
      </div>
      <div className="mr-[6px] mb-[4px] flex h-[32px] bg-[#f0f0f0]">
        <svg viewBox="0 0 36 32" className="h-[32px] w-[36px]" fill="none" stroke="#555" strokeWidth="2.400"><path d="M20 11l-7 5 7 5" /></svg>
        <div className="w-[388px] bg-[#cdcdcd]" />
        <svg viewBox="0 0 32 32" className="ml-auto h-[32px] w-[32px]" fill="none" stroke="#555" strokeWidth="2.400"><path d="M6 11l8 5-8 5" /></svg>
      </div>
    </div>
  );
}

/* ---------- object snaps + status ---------- */

const SNAPS: [string, string, 0 | 1 | 2][] = [
  ["End", "w-[85px]", 1], ["Near", "w-[94px]", 0], ["Point", "w-[99px]", 1], ["Mid", "w-[86px]", 1], ["Cen", "w-[87px]", 0], ["Int", "w-[72px]", 0],
  ["Perp", "w-[92px]", 0], ["Tan", "w-[83px]", 0], ["Quad", "w-[101px]", 0], ["Knot", "w-[94px]", 0], ["Vertex", "w-[113px]", 0],
  ["Project", "w-[135px]", 2], ["Disable", "w-[140px]", 2],
];

function SnapBar() {
  return (
    <div className="flex h-[47px] shrink-0 items-center border-b-2 border-[#c9d2e0] bg-[#eaecf1] pt-[10px] pl-[16px] text-[21.800px]">
      {SNAPS.map(([t, w, s]) => (
        <div key={t} className={`${w} flex items-center ${s === 2 ? "gap-[4px]" : "gap-[7px]"}`}>
          <svg viewBox="0 0 26 26" className={`h-[26px] w-[26px] border-2 ${s === 2 ? "border-[#c3c3c3] bg-[#dedede]" : "border-[#333] bg-white"}`}>
            {s === 1 && <path d="M4 13l6 6L22 5" fill="none" stroke="#333" strokeWidth="2" />}
          </svg>
          <span className="pt-[2px]">{t}</span>
        </div>
      ))}
    </div>
  );
}

/* ---------- RhinoVAULT menu ---------- */

const Spin = ({ c, children }: { c: string; children: React.ReactNode }) => <g fill="none" stroke={c} strokeWidth="1.700">{children}</g>;

const MENU: ({ t: string; more?: boolean; hot?: boolean; icon?: React.ReactNode } | null)[] = [
  { t: "Initialize RV2", icon: <Spin c="#1c96cc"><path strokeWidth="2.400" d="M1 15C2 6 7 0 15 0s13 6 14 15M9 15C10 8 8 4 5 6M21 15c-1-7 1-11 4-9M7 3c3 4 3 8 6 11M23 3c-3 4-3 8-6 11M10 2l5 4 5-4" /><text x="15" y="30" textAnchor="middle" fontSize="18" fontWeight="700" stroke="none" fill="#1c96cc" fontFamily="Open Sans, sans-serif">rV2</text></Spin> },
  { t: "File", more: true },
  { t: "Settings", more: true, hot: true },
  { t: "Cloud", more: true },
  null,
  { t: "Create Pattern", more: true },
  null,
  { t: "Define Boundary Conditions", more: true },
  null,
  { t: "Create FormDiagram", icon: <g fill="#7fe884" stroke="#0fb01f" strokeWidth="2"><path d="M1 2c9 4 19 4 28 0-7 7-11 15-14 23C12 17 8 9 1 2z" /><path d="M8 8c5 2 9 2 14 0M11 14h8M15 5v18M10 5l5 18 5-18" fill="none" strokeWidth="1.400" /></g> },
  { t: "Create ForceDiagram", icon: <g fill="#dbe6ff" stroke="#2a55f0" strokeWidth="1.800"><path d="M15 1l13 5-1 13-12 10L3 19 2 6z" /><path d="M15 1L7 12l8 17 8-17zM2 7l5 5h16l5-5M4 20l3-8M26 20l-3-8" fill="none" strokeWidth="1.400" /></g> },
  null,
  { t: "Horizontal Equilibrium", icon: <g fill="#9fc0ff" stroke="#2a55f0" strokeWidth="2"><path d="M15 3c2 9 6 16 13 22-9-3-17-3-26 0C9 19 13 12 15 3z" /><path d="M15 5v16M4 24l11-8 11 8M11 15h8" fill="none" strokeWidth="1.300" /></g> },
  { t: "Vertical Equilibrium", icon: <Spin c="#b21fb0"><path fill="#dca6dc" d="M1 17C1 6 7 1 15 1s14 5 14 16c-2-5-5-8-8-8-2 5-5 12-6 20C14 21 11 14 9 9c-3 0-6 3-8 8z" /><path d="M9 9c3-3 9-3 12 0M15 1v28M8 3l4 14M22 3l-4 14M6 6h18M4 10l5-1M26 10l-5-1" /></Spin> },
  null,
  { t: "Modify FormDiagram", more: true },
  { t: "Modify ForceDiagram", more: true },
  { t: "Modify ThrustDiagram", more: true },
  null,
  { t: "Analysis", more: true },
  null,
  { t: "Extensions", more: true },
];

const CogPage = ({ colors }: { colors: boolean }) => (
  <svg viewBox="0 0 32 32" className="h-[32px] w-[32px]">
    {colors && <rect width="32" height="32" fill="#f6f6f6" />}
    {colors ? (
      <g stroke="#222" strokeWidth="0.800"><rect x="18" y="1" width="6" height="6" fill="#2fd82f" /><rect x="24" y="1" width="6" height="6" fill="#8be000" /><rect x="18" y="7" width="6" height="7" fill="#e05000" /><rect x="24" y="7" width="6" height="7" fill="#b00090" /></g>
    ) : (
      <g stroke="#222" strokeWidth="1.500"><rect x="18" y="1" width="12" height="19" fill="#fff" /><path d="M18 2.500h12" strokeWidth="3" /><path d="M21 8h5M21 12h6M21 16h4" strokeWidth="1.200" /></g>
    )}
    <g transform="translate(11 22)" fill="#1589b5" stroke="#0b3f55" strokeWidth="1">
      {[0, 45, 90, 135].map((a) => <rect key={a} x="-2.500" y="-10" width="5" height="20" transform={`rotate(${a})`} />)}
      <circle r="7" stroke="none" />
      <rect x="-2.500" y="-8" width="5" height="11" rx="1" fill="#aaa" />
    </g>
  </svg>
);

function DropMenu() {
  return (
    <div className="absolute top-[154px] left-[1315px] h-[611px] w-[420px] border border-[#b5b5b5] bg-[#f2f2f2] p-[2px] pt-[4px] shadow-[4px_4px_4px_rgba(0,0,0,0.5)]">
      {MENU.map((m, i) =>
        m === null ? (
          <div key={i} className="ml-[43px] h-[6.900px] translate-y-[2px] border-t border-[#d5d5d5]" />
        ) : (
          <div key={i} className={`flex h-[37.200px] items-center ${m.hot ? "bg-[#83c9fc]" : ""}`}>
            <div className="flex w-[47px] pl-[4px]">{m.icon && <svg viewBox="0 0 30 30" className="h-[30px] w-[30px] overflow-visible">{m.icon}</svg>}</div>
            <span className="pt-[1px]">{m.t}</span>
            {m.more && <svg viewBox="0 0 10 14" className="mr-[12px] ml-auto h-[14px] w-[10px]" fill="none" stroke="#333" strokeWidth="1.700"><path d="M2 1l5 6-5 6" /></svg>}
          </div>
        ),
      )}
    </div>
  );
}

function SubMenu() {
  return (
    <div className="absolute top-[229px] left-[1729px] w-[259px] border border-[#b5b5b5] bg-[#f2f2f2] p-[2px] pt-[3px] shadow-[4px_4px_4px_rgba(0,0,0,0.5)]">
      <div className="flex h-[37.300px] items-center bg-[#83c9fc] pl-[3px]"><CogPage colors /><span className="ml-[12px] pt-[1px]">Object Settings</span></div>
      <div className="flex h-[37.300px] items-center pl-[3px]"><CogPage colors={false} /><span className="ml-[12px] pt-[1px]">Solver Settings</span></div>
    </div>
  );
}

/* ---------- settings dialog ---------- */

function Group({ title, className, children }: { title: string; className: string; children: React.ReactNode }) {
  return (
    <div className={`relative rounded-[7px] border-2 border-[#d7e2ec] pr-[18px] pl-[17px] ${className}`}>
      <span className="absolute -top-[17px] left-[12px] bg-white pr-[22px] pl-[11px] leading-[30px]">{title}</span>
      {children}
    </div>
  );
}

function Spinner({ label, value }: { label: string; value: string }) {
  return (
    <div className="mb-[7px] flex h-[38px] justify-between">
      <span className="leading-[32px]">{label}</span>
      <div className="flex w-[157px] border-2 border-[#ababb3] bg-white text-right">
        <span className="flex-1 pr-[7px] leading-[37px]">{value}</span>
        <svg viewBox="0 0 32 34" className="h-[34px] w-[32px]">
          <path d="M1 1h30v14H1zM1 19h30v14H1z" fill="#dcdcdc" stroke="#777" strokeWidth="2" />
          <path d="M9 13l7-8 7 8-4-1-3-3-3 3zM9 21l7 8 7-8-4 1-3 3-3-3z" stroke="#000" strokeWidth="1.500" />
        </svg>
      </div>
    </div>
  );
}

function ColorRow({ label, color }: { label: string; color: string }) {
  return (
    <div className="mb-[6px] flex h-[39px] justify-between">
      <span className="leading-[35px]">{label}</span>
      <div className="flex w-[195px] bg-[#dcdcdc]">
        <div className="w-[172px] border-2 border-black" style={{ backgroundColor: color }} />
        <svg viewBox="0 0 23 39" className="h-[39px] w-[23px]"><path d="M5 16l4 1 2.500 2 2.500-2 4-1-6.500 8z" stroke="#000" /></svg>
      </div>
    </div>
  );
}

const SHOW: [string, boolean][] = [
  ["color.analysis", false], ["edges", false], ["faces", true], ["loads", false], ["pipes", false], ["reactions", true],
  ["residuals", false], ["selfweight", false], ["vertices", false],
];
const OBJ_TABS: [string, string][] = [
  ["ForceObject", "w-[149px]"], ["FormObject", "w-[146px]"], ["SkeletonObject", "w-[180px]"], ["ThrustObject", "w-[164px]"], ["PatternObject", "w-[162px]"],
];

function SettingsDialog() {
  return (
    <div className="absolute top-[188px] left-[2560px] flex h-[1828px] w-[939px] flex-col border-2 border-[#111] bg-[#f0f0f0] text-[22px] shadow-[18px_20px_24px_rgba(0,0,0,0.55)]">
      <div className="flex h-[53px] shrink-0 items-center bg-white pl-[10px]">
        <RhinoMark className="h-[32px] w-[32px] -translate-y-[2px]" />
        <span className="ml-[5px]">Settings</span>
        <svg viewBox="0 0 204 24" className="mr-[34px] ml-auto h-[24px] w-[204px]" fill="none" stroke="#111" strokeWidth="2.200">
          <path d="M2 9h21M92 0h18v19H92zM183 -1l20 20M203 -1l-20 20" />
        </svg>
      </div>
      <div className="mt-[22px] flex h-[45px] shrink-0 items-end pl-[25px]">
        {OBJ_TABS.map(([t, w]) =>
          t === "ThrustObject" ? (
            <div key={t} className={`${w} relative z-10 -mb-[2px] h-[46px] border-2 border-b-0 border-[#acacac] bg-white text-center leading-[42px]`}>{t}</div>
          ) : (
            <div key={t} className={`${w} h-[40px] border-2 border-r-[1px] border-b-0 border-[#acacac] bg-gradient-to-b from-[#f0f0f0] to-[#e5e5e5] text-center leading-[38px]`}>{t}</div>
          ),
        )}
      </div>
      <div className="mx-[22px] h-[1627px] shrink-0 border-2 border-[#acacac] bg-white px-[6px] pt-[32px]">
        <Group title="scale" className="h-[182px] pt-[32px]">
          <Spinner label="pipes" value="0.01" />
          <Spinner label="reactions" value="0.1" />
          <Spinner label="residuals" value="1.0" />
        </Group>
        <Group title="color" className="mt-[35px] h-[460px] pt-[32px]">
          <ColorRow label="edges" color="#ff00ff" />
          <ColorRow label="faces" color="#ff00ff" />
          <div className="mb-[6px] flex h-[47px] justify-between">
            <span className="leading-[35px]">mode</span>
            <div className="w-[195px] border-2 border-[#ababb3] pl-[9px] leading-[46px]">None</div>
          </div>
          <ColorRow label="pipes" color="#1a00ff" />
          <ColorRow label="reactions" color="#005000" />
          <ColorRow label="residuals" color="#00ffff" />
          <ColorRow label="vertices" color="#ff00ff" />
          <ColorRow label="vertices:is_anchor" color="#ff0000" />
          <ColorRow label="vertices:is_fixed" color="#00ff00" />
        </Group>
        <Group title="tol" className="mt-[35px] h-[182px] pt-[32px]">
          <Spinner label="pipes" value="0.001" />
          <Spinner label="reactions" value="0.001" />
          <Spinner label="residuals" value="0.001" />
        </Group>
        <Group title="show" className="mt-[35px] h-[382px] pt-[30px]">
          {SHOW.map(([t, on]) => (
            <div key={t} className="flex h-[37.200px] items-center justify-between pr-[2px]">
              <span>{t}</span>
              <svg viewBox="0 0 24 22" className="h-[26px] w-[28px] border-2 border-[#707070] bg-white" preserveAspectRatio="none">
                {on && <path d="M4 11l3-1 3 5 9-12 2 1-10 16z" fill="#212121" />}
              </svg>
            </div>
          ))}
        </Group>
        <Group title="layer" className="mt-[35px] h-[99px] pt-[31px]">
          <div className="h-[46px] border-2 border-[#ababb3] pl-[10px] leading-[45px]">RV2::ThrustDiagram</div>
        </Group>
        <Group title="viz" className="mt-[36px] h-[100px] pt-[32px]">
          <div className="flex justify-between">
            <span className="leading-[32px]">mode</span>
            <div className="h-[46px] w-[195px] border-2 border-[#ababb3] pl-[9px] leading-[45px]">None</div>
          </div>
        </Group>
      </div>
      <div className="mt-[10px] mr-[23px] flex justify-end gap-[9px]">
        {["OK", "Cancel", "Apply"].map((b) => (
          <div key={b} className="h-[45px] w-[157px] border-2 border-[#707070] bg-[#dddddd] text-center leading-[43px]">{b}</div>
        ))}
      </div>
    </div>
  );
}

/* ---------- page ---------- */

export default function App() {
  return (
    <div className="relative h-[2304px] w-[4096px] overflow-hidden bg-white pt-[76px] pl-[169px] font-['Open_Sans',sans-serif] text-[22.400px] leading-none text-black">
      <div className="flex h-[2151px] w-[3758px] flex-col border-2 border-[#222] bg-[#eaecf1] shadow-[18px_20px_24px_rgba(0,0,0,0.27)]">
        <TitleBar />
        <MenuBar />
        <CommandArea />
        <ToolTabs />
        <ToolRow />
        <div className="flex h-[1722px] shrink-0">
          <SideTools />
          <Viewport />
          <RightPanels />
        </div>
        <SnapBar />
        <div className="h-[26px] shrink-0 leading-[36px]">None</div>
        <div className="flex-1 bg-[#c3c3c3]" />
      </div>
      <DropMenu />
      <SubMenu />
      <svg viewBox="0 0 364 142" className="absolute top-[181px] left-[2003px] h-[142px] w-[364px]">
        <path d="M0 70.500L193.500 0v49H363.500v43.500H193.500V142z" fill="#ff0000" />
      </svg>
      <SettingsDialog />
    </div>
  );
}
